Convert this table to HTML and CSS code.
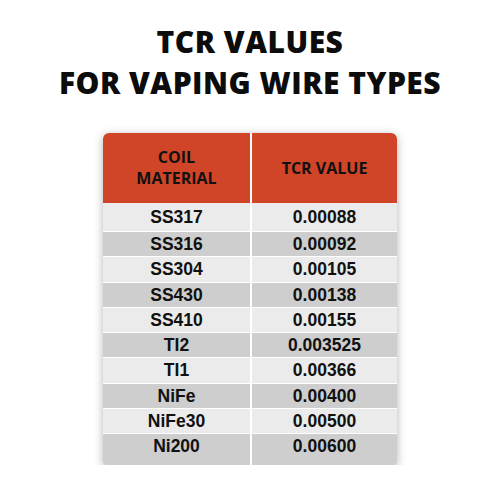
FILE: index.html
```html
<!DOCTYPE html>
<html lang="en">
<head>
    <meta charset="UTF-8">
    <meta name="viewport" content="width=device-width, initial-scale=1.0">
    <title>TCR Values for Vaping Wire Types</title>
    <link rel="stylesheet" href="styles.css">
</head>
<body>
    <h1>TCR VALUES<br>FOR VAPING WIRE TYPES</h1>
    <div class="table-card">
        <table class="tcr-table">
            <thead>
                <tr>
                    <th>COIL<br>MATERIAL</th>
                    <th>TCR VALUE</th>
                </tr>
            </thead>
            <tbody>
                <tr><td>SS317</td><td>0.00088</td></tr>
                <tr><td>SS316</td><td>0.00092</td></tr>
                <tr><td>SS304</td><td>0.00105</td></tr>
                <tr><td>SS430</td><td>0.00138</td></tr>
                <tr><td>SS410</td><td>0.00155</td></tr>
                <tr><td>TI2</td><td>0.003525</td></tr>
                <tr><td>TI1</td><td>0.00366</td></tr>
                <tr><td>NiFe</td><td>0.00400</td></tr>
                <tr><td>NiFe30</td><td>0.00500</td></tr>
                <tr><td>Ni200</td><td>0.00600</td></tr>
            </tbody>
        </table>
    </div>
</body>
</html>
```

FILE: styles.css
```css
body {
    margin: 0;
    background-color: #ffffff;
    color: #111;
    font-family: 'Open Sans', 'Liberation Sans', sans-serif;
}
h1 {
    margin: 21px 0 0 0;
    text-align: center;
    font-size: 30px;
    line-height: 41px;
    font-weight: 800;
    letter-spacing: 0.5px;
    color: #0c0c0c;
}
.table-card {
    width: 294px;
    margin: 30px auto 0 auto;
    border-radius: 6px 6px 3px 3px;
    overflow: hidden;
    box-shadow: 0 2px 10px rgba(0,0,0,0.3);
}
.tcr-table {
    width: 100%;
    border-collapse: separate;
    border-spacing: 0;
    table-layout: fixed;
}
.tcr-table th {
    height: 70px;
    padding: 0;
    background-color: #d04427;
    font-family: 'Open Sans', sans-serif;
    font-size: 16px;
    line-height: 21px;
    font-weight: 700;
    color: #111;
    vertical-align: middle;
}
.tcr-table th + th,
.tcr-table td + td {
    border-left: 2px solid #ffffff;
}
.tcr-table td {
    height: 24.25px;
    padding: 0;
    border-top: 1px solid #ffffff;
    text-align: center;
    font-family: 'Liberation Sans', Arial, sans-serif;
    font-size: 17.5px;
    line-height: 20px;
    font-weight: 700;
    color: #111;
    background-color: #ebebeb;
}
.tcr-table tbody tr:nth-child(even) td {
    background-color: #cecece;
}
.tcr-table tbody tr:first-child td {
    border-top: none;
    height: 28px;
}
.tcr-table tbody tr:last-child td {
    height: 23px;
    padding-bottom: 8px;
}
```
